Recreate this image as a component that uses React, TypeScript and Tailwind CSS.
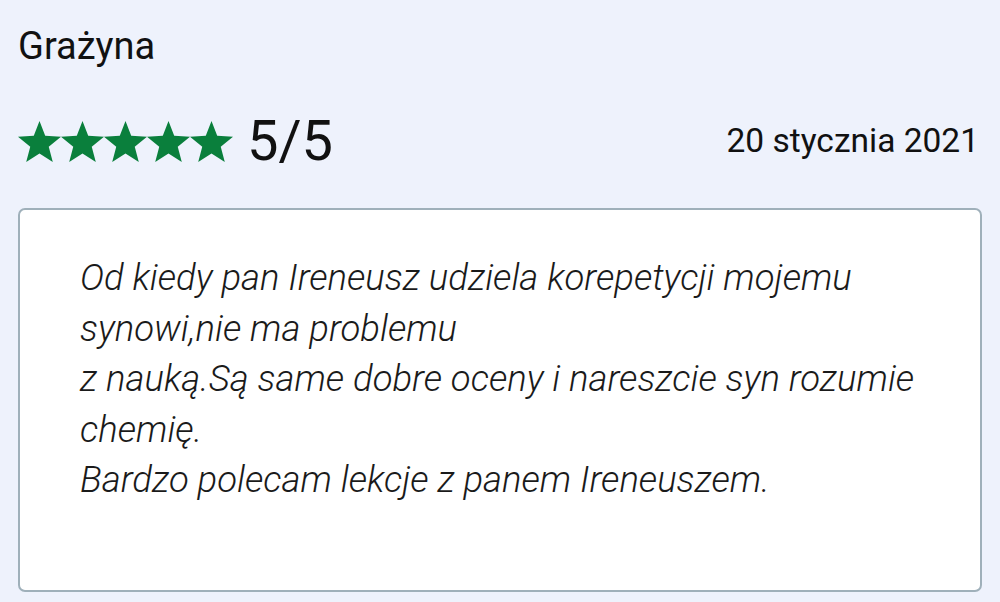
import React from "react";

function starPoints(R: number, r: number) {
  const pts: string[] = [];
  for (let i = 0; i < 10; i++) {
    const rad = i % 2 === 0 ? R : r;
    const a = ((-90 + i * 36) * Math.PI) / 180;
    pts.push(`${(rad * Math.cos(a)).toFixed(4)},${(rad * Math.sin(a)).toFixed(4)}`);
  }
  return pts.join(" ");
}

const PTS = starPoints(1, 0.43);

function Star() {
  return (
    <svg width="43" height="41" viewBox="-0.951 -1 1.902 1.809" className="block">
      <polygon points={PTS} fill="#0a7f3c" />
    </svg>
  );
}

export default function App() {
  const lines = [
    "Od kiedy pan Ireneusz udziela korepetycji mojemu",
    "synowi,nie ma problemu",
    "z nauką.Są same dobre oceny i nareszcie syn rozumie",
    "chemię.",
    "Bardzo polecam lekcje z panem Ireneuszem.",
  ];
  return (
    <div
      className="w-[1000px] h-[602px] bg-[#eef2fc] text-[#111] overflow-hidden px-[18px] pt-[22px]"
      style={{ fontFamily: "Roboto, sans-serif" }}
    >
      <div className="text-[38px] leading-[48px]">Grażyna</div>
      <div className="mt-[46px] flex items-center justify-between h-[50px]">
        <div className="flex items-center">
          <div className="flex mt-[1px]">
            <Star />
            <Star />
            <Star />
            <Star />
            <Star />
          </div>
          <span className="ml-[14px] text-[56px] leading-none">5/5</span>
        </div>
        <span className="text-[33.5px] leading-none mr-[3px]">20 stycznia 2021</span>
      </div>
      <div className="mt-[42px] h-[384px] bg-white border-2 border-[#9fb0ba] rounded-[7px] pl-[60px] pt-[43px]">
        <div className="italic font-light text-[36.5px] leading-[50.5px] text-[#1a1a1a]">
          {lines.map((l, i) => (
            <div key={i} className="whitespace-nowrap">
              {l}
            </div>
          ))}
        </div>
      </div>
    </div>
  );
}
